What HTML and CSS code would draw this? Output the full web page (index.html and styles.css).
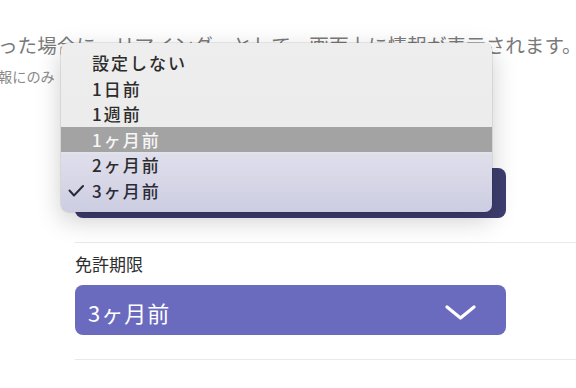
FILE: index.html
```html
<!DOCTYPE html>
<html lang="ja">
<head>
<meta charset="utf-8">
<link rel="stylesheet" href="styles.css">
</head>
<body>
<div class="page">
  <div class="intro">
    <p class="lead">った場合に、リマインダーとして、画面上に情報が表示されます。</p>
    <p class="note">報にのみ　表示されます。</p>
  </div>
  <div class="form">
    <section class="field">
      <div class="label">車検期限</div>
      <div class="select select-pressed">
        <span class="value">3ヶ月前</span>
      </div>
    </section>
    <section class="field">
      <div class="label">免許期限</div>
      <div class="select">
        <span class="value">3ヶ月前</span>
        <svg class="chevron" width="31" height="15" viewBox="0 0 31 15"><polyline points="2,2 15.5,13 29,2" fill="none" stroke="#ffffff" stroke-width="3.2" stroke-linecap="round" stroke-linejoin="round"/></svg>
      </div>
    </section>
  </div>
  <div class="menu">
    <div class="item">設定しない</div>
    <div class="item">1日前</div>
    <div class="item">1週前</div>
    <div class="item item-hover">1ヶ月前</div>
    <div class="item">2ヶ月前</div>
    <div class="item item-checked">
      <svg class="check" width="16" height="12" viewBox="0 0 16 12"><polyline points="1.5,5.5 6,10.5 15,1" fill="none" stroke="#2b2b38" stroke-width="2" stroke-linecap="round" stroke-linejoin="round"/></svg>
      3ヶ月前
    </div>
  </div>
</div>
</body>
</html>
```

FILE: styles.css
```css
html, body {
  margin: 0;
  padding: 0;
  background: #ffffff;
}
body {
  width: 576px;
  height: 388px;
  overflow: hidden;
  font-family: "Noto Sans CJK JP", "Noto Sans", sans-serif;
}
.page {
  position: relative;
  width: 576px;
  height: 388px;
  overflow: hidden;
}
.intro {
  padding-top: 34px;
  margin-left: -2px;
  white-space: nowrap;
}
.lead {
  margin: 0;
  font-size: 19.6px;
  line-height: 22px;
  color: #7a7a7a;
}
.note {
  margin: 11px 0 0 0;
  font-size: 14.2px;
  line-height: 18px;
  color: #8a8a8a;
}
.form {
  margin-top: 41px;
  margin-left: 75px;
}
.field {
  padding: 9px 0 24px 0;
  border-bottom: 1px solid #e9e9e9;
}
.label {
  font-size: 17px;
  line-height: 24px;
  color: #2e2e2e;
  margin-bottom: 9px;
}
.select {
  width: 431px;
  height: 50px;
  box-sizing: border-box;
  border-radius: 8px;
  background: #6a6abf;
  display: flex;
  align-items: center;
  justify-content: space-between;
  padding: 4px 30px 0 13px;
}
.select-pressed {
  background: #3e3e70;
}
.value {
  font-size: 22px;
  line-height: 26px;
  color: #ffffff;
  letter-spacing: 1px;
}
.chevron {
  display: block;
  margin-top: 1px;
}
.menu {
  position: absolute;
  left: 61px;
  top: 43px;
  width: 431px;
  height: 169px;
  box-sizing: border-box;
  padding-top: 7px;
  border-radius: 7px;
  background: linear-gradient(to bottom, #eeeeee 0px, #ebebeb 105px, #dedeeb 112px, #d6d6e7 140px, #cccde1 169px);
  box-shadow: 0 8px 26px rgba(0, 0, 0, 0.2), 0 0 0 0.5px rgba(0, 0, 0, 0.14);
}
.item {
  height: 25.5px;
  display: flex;
  align-items: center;
  padding-left: 31px;
  font-size: 17px;
  letter-spacing: 2px;
  font-weight: 500;
  color: #2c2c2c;
  position: relative;
}
.item-hover {
  background: #a3a3a3;
  color: #f6f6f6;
}
.item-checked {
  color: #2b2b38;
}
.check {
  position: absolute;
  left: 7px;
  top: 7px;
}
```
